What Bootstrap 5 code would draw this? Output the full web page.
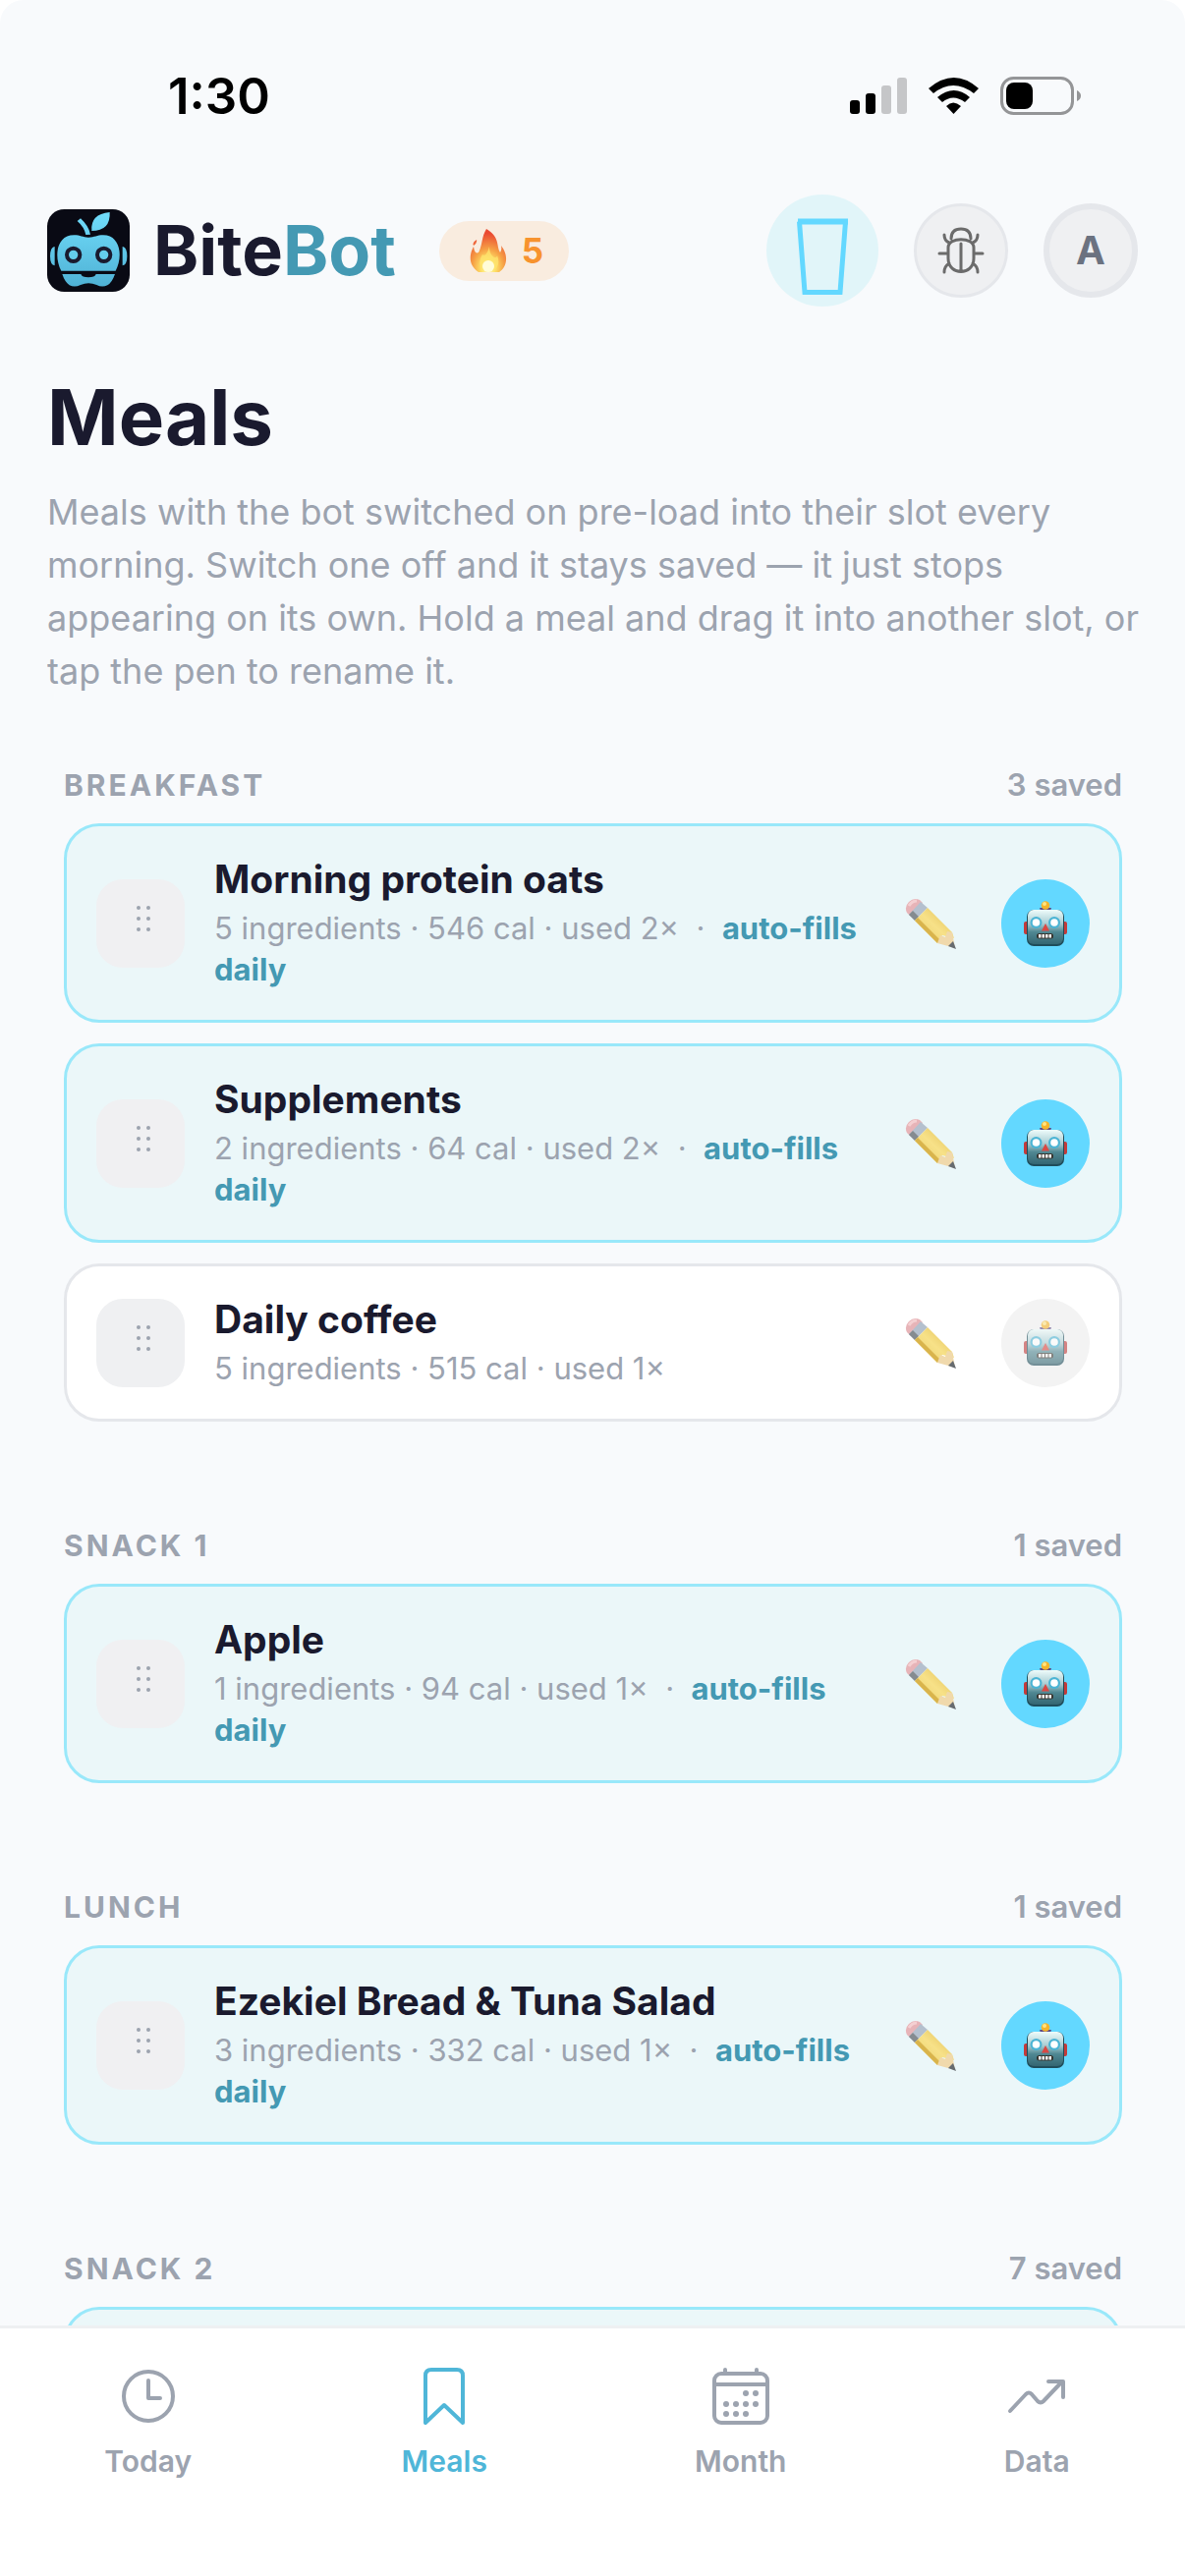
<!DOCTYPE html>
<html lang="en">
<head>
<meta charset="utf-8">
<meta name="viewport" content="width=device-width, initial-scale=1">
<title>BiteBot – Meals</title>
<link href="https://cdn.jsdelivr.net/npm/bootstrap@5.3.0/dist/css/bootstrap.min.css" rel="stylesheet">
<style>
  :root { --ink:#1a1a2e; --muted:#9ca3af; --teal:#4499b3; --cyan:#63d8ff; --line:#e5e7eb; }
  body { font-family: Inter, "Liberation Sans", sans-serif; color: var(--ink); background:#fff; }
  svg { display:block; flex:none; }
  .screen { background:#f8fafc; border-radius:24px 24px 0 0; }
  .scroller { scrollbar-width:none; min-height:0; }
  .scroller::-webkit-scrollbar { display:none; }
  .statusbar { padding:78px 105px 81px 171px; height:198px; }
  .clock { font-size:51px; line-height:39px; font-weight:600; color:#000; }
  .gutter { padding-left:48px; padding-right:48px; }
  .brand { font-size:70px; line-height:84px; font-weight:700; margin-left:24px; }
  .teal { color:var(--teal); }
  .streak { margin-left:44px; height:61px; padding:0 26px 0 30px; gap:14px; background:#f9ecdf; color:#f7932e; font-size:35px; font-weight:700; border-radius:31px; }
  .tools { gap:36px; }
  .round { border-radius:50%; border:0; padding:0; display:flex; align-items:center; justify-content:center; flex:none; }
  .water { width:114px; height:114px; background:#e1f5f9; }
  .tool { width:96px; height:96px; background:#eff0f2; border:3px solid var(--line); }
  .avatar { border-width:6px; color:#6b7280; font-size:40px; font-weight:700; }
  h1.title { font-size:78px; line-height:100px; font-weight:700; margin:63px 0 19px; }
  .about { padding-left:48px; padding-right:36px; }
  .intro { font-size:36px; line-height:54px; color:var(--muted); margin:0; }
  .slots { padding:71px 64px 60px 65px; gap:108px; }
  .slot-head { font-size:31px; line-height:36px; color:var(--muted); margin-bottom:21px; }
  .slot-head h2 { font-size:30px; line-height:36px; font-weight:700; letter-spacing:3px; margin:0; }
  .slot-head span { font-weight:600; }
  .meals { gap:21px; }
  .meal { border:3px solid var(--line); border-radius:36px; background:#fff; padding:30px; gap:30px; min-height:161px; }
  .meal.auto { background:#ebf7f9; border-color:#99e8fa; min-height:203px; }
  .grip { width:90px; height:90px; border-radius:27px; background:#eff0f2; border:0; padding:0; flex:none; }
  .meal.auto .grip { background:#f0f0f2; }
  .meal h3 { font-size:39px; line-height:48px; font-weight:700; margin:0 0 5px; }
  .meal p { font-size:31px; line-height:42px; color:var(--muted); margin:0; }
  .meal p b { font-weight:700; color:var(--teal); }
  .pen { width:90px; height:90px; border:0; background:none; padding:0; flex:none; display:flex; align-items:center; justify-content:center; }
  .acts { gap:27px; }
  .bot { width:90px; height:90px; background:#f3f3f3; }
  .bot svg { opacity:.6; }
  .auto .bot { background:var(--cyan); }
  .auto .bot svg { opacity:1; }
  .tabs { background:#fff; border-top:3px solid #eef0f2; height:255px; padding-top:39px; }
  .tabs a { color:var(--muted); font-size:30px; line-height:36px; font-weight:600; gap:18px; text-decoration:none; flex:1 1 0; }
  .tabs a.on { color:#4fb6d8; }
</style>
<script src="https://cdn.jsdelivr.net/npm/bootstrap@5.3.0/dist/js/bootstrap.bundle.min.js"></script>
</head>
<body>
<svg width="0" height="0" class="position-absolute" aria-hidden="true">
  <defs>
    <linearGradient id="face" x1="0" y1="0" x2="0" y2="1"><stop offset="0" stop-color="#eefcfb"/><stop offset=".4" stop-color="#a9cdd3"/><stop offset=".65" stop-color="#4f8792"/><stop offset="1" stop-color="#346672"/></linearGradient>
    <linearGradient id="wood" x1="0" y1="1" x2="1" y2="0"><stop offset="0" stop-color="#e9cf68"/><stop offset=".5" stop-color="#f7e188"/><stop offset="1" stop-color="#dfbb4e"/></linearGradient>
    <radialGradient id="fire" cx=".5" cy=".9" r=".8"><stop offset="0" stop-color="#fffde0"/><stop offset=".25" stop-color="#fee268"/><stop offset=".55" stop-color="#f6a045"/><stop offset="1" stop-color="#ea4a33"/></radialGradient>
    <linearGradient id="apple" gradientUnits="userSpaceOnUse" x1="0" y1="0" x2="0" y2="252"><stop offset="0" stop-color="#72dffd"/><stop offset="1" stop-color="#4daed2"/></linearGradient>
  </defs>
  <symbol id="dots" viewBox="0 0 90 90"><g fill="#9ca3af"><circle cx="43" cy="29" r="2"/><circle cx="53" cy="29" r="2"/><circle cx="43" cy="40" r="2"/><circle cx="53" cy="40" r="2"/><circle cx="43" cy="51" r="2"/><circle cx="53" cy="51" r="2"/></g></symbol>
  <symbol id="pencil" viewBox="0 0 52 52">
    <path d="M2 15 Q-1 9 4 4 Q9-1 15 2 L18 5 L6 19Z" fill="#e7b4b8"/>
    <path d="M4 8 Q7 3 12 3" fill="none" stroke="#f4d0d2" stroke-width="3"/>
    <path d="M16 4 L23 10 L10 23 L4 17Z" fill="#b4c0ce"/><path d="M8 13 L14 19 L10 23 L4 17Z" fill="#858b90"/>
    <path d="M23 10 L48 35 L50 41 L38 38 L33 46 L10 23Z" fill="url(#wood)"/>
    <path d="M10 23 L13 20 L38 45 L33 46Z" fill="#d9b44c"/>
    <path d="M48 35 L51 51 L33 46 L36 38 L41 40 L43 34Z" fill="#f0d9ac"/>
    <path d="M49 44 L52 52 L44 49Z" fill="#666b70"/>
  </symbol>
  <symbol id="robot" viewBox="0 0 44 46">
    <path d="M16 7H28Q27 12 22 12Q17 12 16 7Z" fill="#5d4b86"/><circle cx="22" cy="4.500" r="4.300" fill="#f5b52c"/><circle cx="21" cy="3" r="2" fill="#ffe584"/>
    <rect x="0" y="21" width="5" height="13" rx="2" fill="#c13b3b"/><rect x="39" y="21" width="5" height="13" rx="2" fill="#c13b3b"/>
    <rect x="3" y="9" width="38" height="37" rx="7" fill="#1f4d5b"/><rect x="4" y="9" width="36" height="35" rx="6" fill="url(#face)"/>
    <circle cx="12.500" cy="22" r="6" fill="#4bb4d4"/><circle cx="12.500" cy="22" r="3.800" fill="#fff"/><circle cx="31" cy="22" r="6" fill="#4bb4d4"/><circle cx="31" cy="22" r="3.800" fill="#fff"/>
    <path d="M22 23L26 30.500H18Z" fill="#d94843"/><rect x="13" y="33" width="17" height="5.500" rx="2.500" fill="#37352f"/><path d="M15 35.700H29" stroke="#fff" stroke-width="3.600" stroke-dasharray="2.500 1"/>
  </symbol>
</svg>

<div class="screen vh-100 d-flex flex-column">
  <main class="scroller flex-grow-1 overflow-auto">
    <div class="statusbar d-flex align-items-center justify-content-between">
      <span class="clock">1:30</span>
      <svg width="236" height="39" viewBox="0 0 236 39" role="img" aria-label="Signal, Wi-Fi, battery">
        <rect x="0" y="24" width="10" height="14" rx="3"/><rect x="16" y="17" width="10" height="21" rx="3"/><rect x="32" y="9" width="10" height="29" rx="3" fill="#c5c6c8"/><rect x="48" y="1" width="10" height="37" rx="3" fill="#c5c6c8"/>
        <path d="M80 12 L85 17 Q105 1 126 17 L131 12 Q106 -10 80 12ZM89 21 L94 26 Q105 17 117 26 L122 21 Q106 7 89 21ZM98 30 L105.500 38 L113 30 Q105 23 98 30Z"/>
        <rect x="154.500" y="1.500" width="72" height="36" rx="12" fill="none" stroke="#949597" stroke-width="3"/><rect x="159" y="6" width="27" height="27" rx="8"/><path d="M231 14Q235 16 235 19.500T231 25Z" fill="#949597"/>
      </svg>
    </div>

    <header class="gutter d-flex align-items-center justify-content-between">
      <div class="d-flex align-items-center">
        <svg width="84" height="84" viewBox="0 0 252 252" role="img" aria-label="BiteBot logo">
          <rect width="252" height="252" rx="52" fill="#090a14"/>
          <g fill="url(#apple)">
            <path d="M92 36L102 28Q127 51 132 77L118 78Q113 54 92 36Z"/><path d="M136 66Q131 15 191 9Q194 66 136 66Z"/>
            <path d="M43 188C20 145 28 79 82 79C102 79 108 86 126 86C145 86 152 79 171 79C224 79 232 145 209 188Z"/>
            <path d="M46 198H103Q106 208 126 208Q146 208 149 198H207Q198 224 184 232Q168 240 151 231Q126 220 102 231Q84 240 68 232Q54 222 46 198Z"/>
            <path d="M23 114V172Q9 169 9 143T23 114ZM230 114V172Q244 169 244 143T230 114Z"/>
          </g>
          <g fill="#64cdec" stroke="#1a1a2e" stroke-width="12"><circle cx="80" cy="139" r="20"/><circle cx="173" cy="139" r="20"/></g>
        </svg>
        <span class="brand">Bite<span class="teal">Bot</span></span>
        <div class="streak d-flex align-items-center">
          <svg width="40" height="44" viewBox="0 0 40 44" aria-hidden="true"><path d="M18 0C32 8 28 18 32 24Q34 21 33 17C41 27 39 39 31 44H10C0 37 0 27 5 18Q6 26 10 24C14 17 13 8 18 0ZM5 17Q3 14 8 11Q9 14 5 17Z" fill="url(#fire)"/><path d="M21 18Q21 26 26 29Q29 29 29 27Q33 37 25 43H15Q8 35 14 26Q18 29 21 18Z" fill="#fee36d" opacity=".8"/><ellipse cx="20" cy="38" rx="6" ry="6" fill="#fffcd8"/></svg>
          <span>5</span>
        </div>
      </div>
      <div class="tools d-flex align-items-center">
        <button type="button" class="round water" aria-label="Log water"><svg width="54" height="90" viewBox="0 0 54 90" fill="none" stroke="#63d8ff"><path d="M2 15.500H53" stroke-width="6"/><path d="M3.500 15.500L9 87.500H45L50.500 15.500" stroke-width="5"/></svg></button>
        <button type="button" class="round tool" aria-label="Report a bug"><svg width="48" height="48" viewBox="0 0 48 48" fill="none" stroke="#6b6b6b" stroke-width="3" stroke-linecap="round"><path d="M14 12Q14 2 24 2T34 12M24 17V44M11 21C11 10 37 10 37 21V32C37 50 11 50 11 32ZM10 27H2M38 27H46M12 16Q7 14 7 8M36 16Q41 14 41 8M12 37Q7 40 7 46M36 37Q41 40 41 46"/></svg></button>
        <button type="button" class="round tool avatar" aria-label="Account">A</button>
      </div>
    </header>

    <section class="about">
      <h1 class="title">Meals</h1>
      <p class="intro">Meals with the bot switched on pre-load into their slot every morning. Switch one off and it stays saved — it just stops appearing on its own. Hold a meal and drag it into another slot, or tap the pen to rename it.</p>
    </section>

    <div class="slots d-flex flex-column">
      <section>
        <div class="slot-head d-flex justify-content-between"><h2>BREAKFAST</h2><span>3 saved</span></div>
        <div class="meals d-flex flex-column">
          <article class="meal auto d-flex align-items-center">
            <button type="button" class="grip" aria-label="Drag"><svg width="90" height="90"><use href="#dots"/></svg></button>
            <div class="flex-grow-1"><h3>Morning protein oats</h3><p>5 ingredients · 546 cal · used 2× &nbsp;·&nbsp; <b>auto-fills daily</b></p></div>
            <div class="acts d-flex"><button type="button" class="pen" aria-label="Rename"><svg width="52" height="52"><use href="#pencil"/></svg></button><button type="button" class="round bot" aria-label="Auto-fill"><svg width="44" height="46"><use href="#robot"/></svg></button></div>
          </article>
          <article class="meal auto d-flex align-items-center">
            <button type="button" class="grip" aria-label="Drag"><svg width="90" height="90"><use href="#dots"/></svg></button>
            <div class="flex-grow-1"><h3>Supplements</h3><p>2 ingredients · 64 cal · used 2× &nbsp;·&nbsp; <b>auto-fills daily</b></p></div>
            <div class="acts d-flex"><button type="button" class="pen" aria-label="Rename"><svg width="52" height="52"><use href="#pencil"/></svg></button><button type="button" class="round bot" aria-label="Auto-fill"><svg width="44" height="46"><use href="#robot"/></svg></button></div>
          </article>
          <article class="meal d-flex align-items-center">
            <button type="button" class="grip" aria-label="Drag"><svg width="90" height="90"><use href="#dots"/></svg></button>
            <div class="flex-grow-1"><h3>Daily coffee</h3><p>5 ingredients · 515 cal · used 1×</p></div>
            <div class="acts d-flex"><button type="button" class="pen" aria-label="Rename"><svg width="52" height="52"><use href="#pencil"/></svg></button><button type="button" class="round bot" aria-label="Auto-fill"><svg width="44" height="46"><use href="#robot"/></svg></button></div>
          </article>
        </div>
      </section>

      <section>
        <div class="slot-head d-flex justify-content-between"><h2>SNACK 1</h2><span>1 saved</span></div>
        <article class="meal auto d-flex align-items-center">
          <button type="button" class="grip" aria-label="Drag"><svg width="90" height="90"><use href="#dots"/></svg></button>
          <div class="flex-grow-1"><h3>Apple</h3><p>1 ingredients · 94 cal · used 1× &nbsp;·&nbsp; <b>auto-fills daily</b></p></div>
          <div class="acts d-flex"><button type="button" class="pen" aria-label="Rename"><svg width="52" height="52"><use href="#pencil"/></svg></button><button type="button" class="round bot" aria-label="Auto-fill"><svg width="44" height="46"><use href="#robot"/></svg></button></div>
        </article>
      </section>

      <section>
        <div class="slot-head d-flex justify-content-between"><h2>LUNCH</h2><span>1 saved</span></div>
        <article class="meal auto d-flex align-items-center">
          <button type="button" class="grip" aria-label="Drag"><svg width="90" height="90"><use href="#dots"/></svg></button>
          <div class="flex-grow-1"><h3>Ezekiel Bread &amp; Tuna Salad</h3><p>3 ingredients · 332 cal · used 1× &nbsp;·&nbsp; <b>auto-fills daily</b></p></div>
          <div class="acts d-flex"><button type="button" class="pen" aria-label="Rename"><svg width="52" height="52"><use href="#pencil"/></svg></button><button type="button" class="round bot" aria-label="Auto-fill"><svg width="44" height="46"><use href="#robot"/></svg></button></div>
        </article>
      </section>

      <section>
        <div class="slot-head d-flex justify-content-between"><h2>SNACK 2</h2><span>7 saved</span></div>
        <article class="meal auto"></article>
      </section>
    </div>
  </main>

  <nav class="tabs d-flex flex-shrink-0" aria-label="Main">
    <a href="#" class="d-flex flex-column align-items-center"><svg width="60" height="60" viewBox="0 0 60 60" fill="none" stroke="currentColor" stroke-width="4" stroke-linecap="round" stroke-linejoin="round"><circle cx="30" cy="30" r="25"/><path d="M30 14V32H42"/></svg>Today</a>
    <a href="#" class="on d-flex flex-column align-items-center" aria-current="page"><svg width="60" height="60" viewBox="0 0 60 60" fill="none" stroke="currentColor" stroke-width="4" stroke-linecap="round" stroke-linejoin="round"><path d="M11 57V9Q11 3 17 3H43Q49 3 49 9V57L30 39Z"/></svg>Meals</a>
    <a href="#" class="d-flex flex-column align-items-center"><svg width="60" height="60" viewBox="0 0 60 60" fill="none" stroke="currentColor" stroke-width="4" stroke-linecap="round"><rect x="3" y="7" width="54" height="50" rx="7"/><path d="M3 18H57M14 3V7M46 3V7"/><g fill="currentColor" stroke="none"><circle cx="35" cy="27" r="3"/><circle cx="45" cy="27" r="3"/><circle cx="15" cy="38" r="3"/><circle cx="25" cy="38" r="3"/><circle cx="35" cy="38" r="3"/><circle cx="45" cy="38" r="3"/><circle cx="15" cy="48" r="3"/><circle cx="25" cy="48" r="3"/><circle cx="35" cy="48" r="3"/></g></svg>Month</a>
    <a href="#" class="d-flex flex-column align-items-center"><svg width="60" height="60" viewBox="0 0 60 60" fill="none" stroke="currentColor" stroke-width="4" stroke-linecap="round" stroke-linejoin="round"><path d="M3 45L19 28Q22 25 25 28L31 35Q34 38 37 35L56 15M42 15H57V31"/></svg>Data</a>
  </nav>
</div>
</body>
</html>
